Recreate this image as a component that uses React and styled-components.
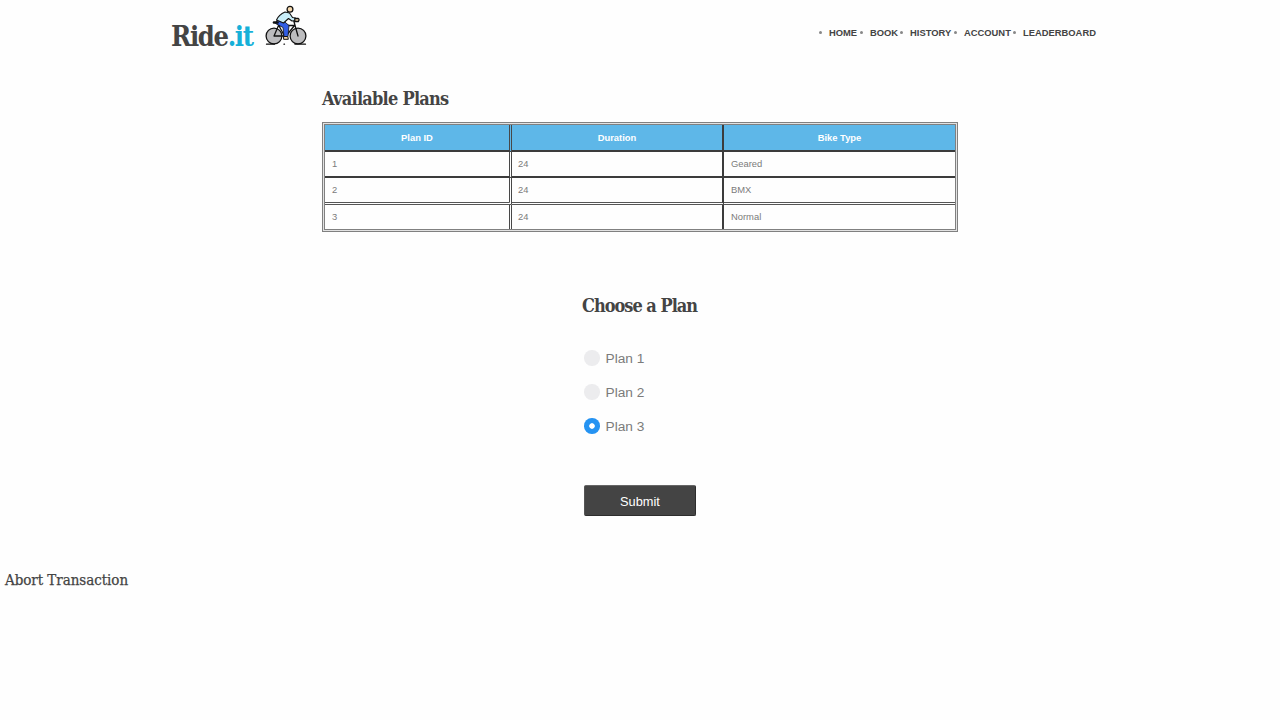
import React, { useState } from "react";
import styled, { createGlobalStyle } from "styled-components";

const Global = createGlobalStyle`
  * { box-sizing: border-box; }
  body { margin: 0; background: #fefefe; color: #7b7b7b; font-family: "Liberation Sans", Arial, sans-serif; }
`;
const Page = styled.div`
  height: 720px;
  overflow: hidden;
  display: flex;
  flex-direction: column;
`;
const Header = styled.header`
  height: 86px;
  padding: 0 183px 0 171px;
  display: flex;
  justify-content: space-between;
  align-items: flex-start;
`;
const Brand = styled.div`
  display: flex;
  align-items: flex-start;
`;
const Slab = styled.span`
  display: block;
  margin: 0;
  width: ${p => p.$w}px;
  white-space: nowrap;
  color: #444;
  font-family: "DejaVu Serif Condensed", "DejaVu Serif", serif;
  font-stretch: condensed;
  font-weight: ${p => p.$weight || 700};
  font-size: ${p => p.$size}px;
  letter-spacing: ${p => p.$track || 0}px;
  line-height: ${p => p.$line}px;
`;
const Logo = styled(Slab)`
  margin: 19px 11px 0 0;
`;
const Accent = styled.span`
  color: #15b0d8;
`;
const Bike = styled.svg`
  margin-top: 5px;
  width: 42px;
  height: 42px;
`;
const Nav = styled.ul`
  list-style: none;
  margin: 26px 0 0;
  padding: 0;
  display: flex;
`;
const NavItem = styled.li`
  display: flex;
  align-items: center;
  width: ${p => p.$w}px;
  height: 12px;
  color: #444;
  font-size: 9.4px;
  font-weight: 700;
  white-space: nowrap;
  &::before {
    content: "";
    width: 3px;
    height: 3px;
    margin: 1px 7px 0 0;
    border-radius: 50%;
    background: #888;
  }
`;
const Plans = styled.section`
  width: 636px;
  height: 201px;
  margin-left: 322px;
`;
const Table = styled.table`
  width: 636px;
  height: 110px;
  margin-top: 10px;
  border: 3px double #808080;
  border-spacing: 0;
  table-layout: fixed;
  background: #e2e2e2;
  font-size: 9.4px;
`;
const Cell = styled.td`
  padding: 0 7px 1px ${p => p.$pad}px;
  height: ${p => p.$h}px;
  background: #fefefe;
  border-right: ${p => p.$right || "0"};
  border-bottom: ${p => p.$bottom || "0"};
`;
const HeadCell = styled(Cell)`
  padding-bottom: 0;
  background: #5eb7e8;
  color: #fff;
  text-align: center;
  font-weight: 700;
`;
const Chooser = styled.form`
  width: 116px;
  margin: 5px 0 0 582px;
  height: 228px;
`;
const Options = styled.div`
  margin: 21px 0 0 2px;
  display: flex;
  flex-direction: column;
`;
const Option = styled.label`
  display: flex;
  align-items: center;
  gap: 6px;
  height: 34px;
  font-size: 13.7px;
`;
const Radio = styled.input`
  appearance: none;
  margin: 0;
  width: 15.5px;
  height: 15.5px;
  border-radius: 50%;
  background: #ececee;
  &:checked { background: radial-gradient(circle, #fff 0 2.4px, #2593f2 3.1px); }
`;
const Submit = styled.button`
  display: block;
  margin: 42px 0 0 2px;
  width: 112px;
  height: 31px;
  padding: 2px 0 0;
  border: 1px solid #2d2d2d;
  border-top-color: #666;
  border-left-color: #555;
  border-radius: 2px;
  background: #444;
  color: #fff;
  font: 12.8px "Liberation Sans", Arial, sans-serif;
`;
const Abort = styled(Slab)`
  margin: 49px 0 0 5px;
  -webkit-text-stroke: 0.25px #444;
`;

function Cyclist() {
  return (
    <Bike viewBox="0 0 42 42" fill="none" stroke="#111" strokeWidth="1.3" strokeLinecap="round" strokeLinejoin="round">
      <circle cx="9" cy="31" r="7.900" fill="#bcbcbe" />
      <circle cx="33" cy="31" r="7.900" fill="#bcbcbe" />
      <path d="M1.500 39.200h8M19 39.200h.5M30 39.200h10.500" />
      <path d="M9 31l4.500-10.500h16L21 31H9M13 19l6.500 12M33 31L28.800 16h3.500" />
      <path d="M12 15.500l-1.500 3 7.500 4 1 9h4l1-11-6.500-5.500z" stroke="#111" strokeWidth=".8" fill="#315de3" />
      <path d="M19 31.500h3.800l.5 2.800h-4.300z" fill="#f5d8ad" strokeWidth="1" />
      <path d="M20 7c-3.500 1.500-7 4.500-8.500 8l7 3 5-4.500 3.500 2.500 3.500-.5v-2.500l-3-.5-3-4.500z" fill="#c8edf8" strokeWidth="1.100" />
      <circle cx="25" cy="4.200" r="2.900" fill="#f5d8ad" />
      <path d="M29.800 13.500h3.500q1.500 1 0 3h-3.500z" fill="#f5d8ad" />
      <path d="M9 17.500h3.500" strokeWidth="2.600" />
    </Bike>
  );
}

const links = [["HOME", 41], ["BOOK", 40], ["HISTORY", 54], ["ACCOUNT", 59], ["LEADERBOARD", 84]];
const rows = [["1", "24", "Geared"], ["2", "24", "BMX"], ["3", "24", "Normal"]];
const heights = [26, 27, 24];
const pads = [7, 6, 7];
const dark = "2px solid #3c3c3c";
const verticals = ["3px double #484848", dark, undefined];
const bottoms = [dark, "3px double #555", undefined];

export default function App() {
  const [plan, setPlan] = useState(3);
  return (
    <Page>
      <Global />
      <Header>
        <Brand>
          <Logo $w={83} $size={27} $track={-1.3} $line={36}>Ride<Accent>.it</Accent></Logo>
          <Cyclist />
        </Brand>
        <Nav>{links.map(([name, w]) => <NavItem key={name} $w={w}>{name}</NavItem>)}</Nav>
      </Header>
      <Plans>
        <Slab as="h2" $w={128} $size={18} $track={-0.75} $line={26}>Available Plans</Slab>
        <Table>
          <colgroup><col width="187" /><col width="212" /><col /></colgroup>
          <thead>
            <tr>{["Plan ID", "Duration", "Bike Type"].map((t, i) => (
              <HeadCell as="th" key={t} $pad={7} $h={27} $right={verticals[i]} $bottom={dark}>{t}</HeadCell>
            ))}</tr>
          </thead>
          <tbody>{rows.map((r, n) => (
            <tr key={r[0]}>{r.map((t, i) => (
              <Cell key={i} $pad={pads[i]} $h={heights[n]} $right={verticals[i]} $bottom={bottoms[n]}>{t}</Cell>
            ))}</tr>
          ))}</tbody>
        </Table>
      </Plans>
      <Chooser onSubmit={e => e.preventDefault()}>
        <Slab as="h2" $w={116} $size={18} $track={-1} $line={28}>Choose a Plan</Slab>
        <Options>{[1, 2, 3].map(n => (
          <Option key={n}>
            <Radio type="radio" name="plan" checked={plan === n} onChange={() => setPlan(n)} />
            Plan {n}
          </Option>
        ))}</Options>
        <Submit>Submit</Submit>
      </Chooser>
      <Abort $w={126} $size={15} $track={-0.05} $weight={400} $line={22}>Abort Transaction</Abort>
    </Page>
  );
}
